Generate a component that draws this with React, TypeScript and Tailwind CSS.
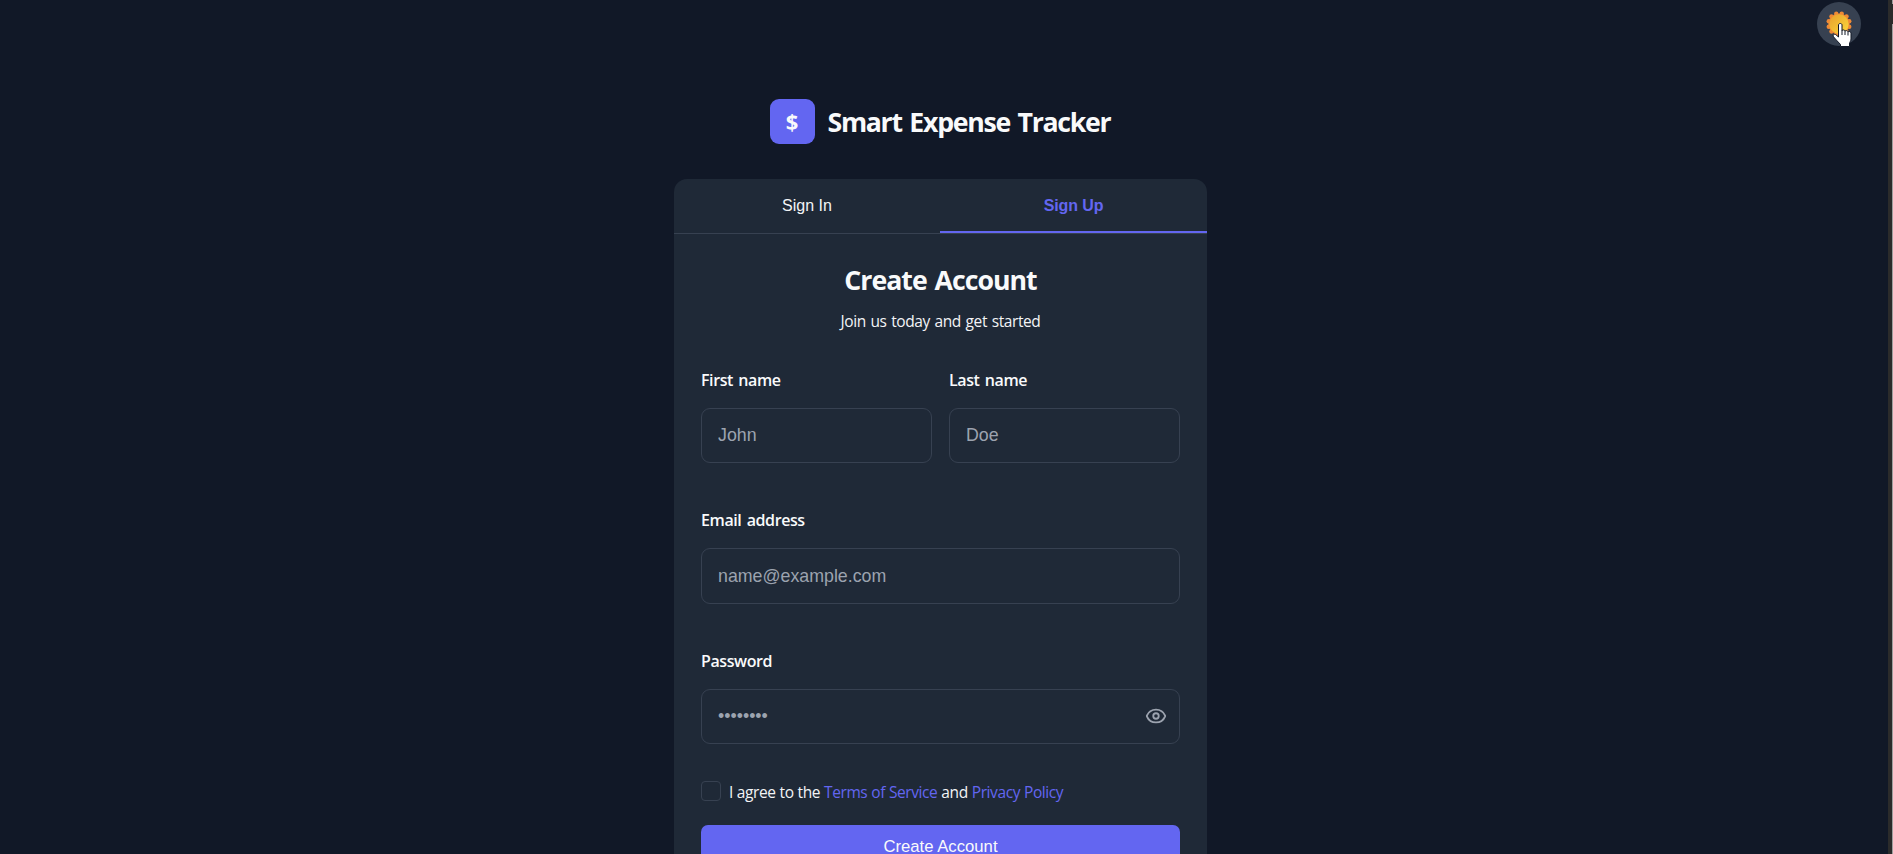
import { Eye } from "lucide-react";

const sunPoints = Array.from({ length: 12 }, (_, i) => {
  const a = (i * Math.PI) / 6 + Math.PI / 12;
  return { x: 13 + 10.6 * Math.cos(a), y: 13 + 10.6 * Math.sin(a) };
});

function Sun() {
  return (
    <svg width="26" height="26" viewBox="0 0 26 26">
      <defs>
        <linearGradient id="sun" x1="0" y1="0" x2="1" y2="1">
          <stop offset="0" stopColor="#e8a02c" />
          <stop offset="1" stopColor="#fbd83c" />
        </linearGradient>
      </defs>
      {sunPoints.map((p, i) => (
        <circle key={i} cx={p.x} cy={p.y} r="2.2" fill="#f08a35" />
      ))}
      <circle cx="13" cy="13" r="10.6" fill="#f08a35" />
      <circle cx="13" cy="13" r="9.7" fill="url(#sun)" />
    </svg>
  );
}

function Cursor() {
  return (
    <svg className="absolute left-[15px] top-[20px]" width="20" height="25" viewBox="0 0 20 25">
      <path
        d="M6.500 3C6.500 1 10 1 10 3V8.500c.6-.9 3-.7 3 .6.6-.9 3-.6 3 .7.7-.7 3-.3 3 1.300V17c0 2-1.500 3.200-1.500 5v2.500H8.500V22.500C6 20 4 17.500 1.700 15 .3 13 2.300 11.500 4 12.800L6.500 15Z"
        fill="#fff"
        stroke="#111827"
        strokeWidth="1"
      />
      <path d="M10 8v5M13 9v4M16 10v3.500" stroke="#111827" strokeWidth="1" />
    </svg>
  );
}

const labelClass =
  "block h-6 text-[16px] leading-6 font-semibold tracking-[-0.4px] [word-spacing:1.5px] text-[#f9fafb]";
const inputClass =
  "block h-[55px] w-full rounded-[9px] border border-[#374151] bg-transparent px-4 font-['Liberation_Sans',sans-serif] text-[17.8px] text-white outline-none placeholder:text-[#9ca3af]";

export default function App() {
  return (
    <div className="flex h-[854px] w-full overflow-hidden bg-[#111827] font-['Open_Sans','Noto_Sans',sans-serif] text-[#f9fafb]">
      <main className="relative flex min-w-0 flex-1 flex-col items-center pr-[7px] pt-[99px]">
        <button className="absolute right-[27px] top-[2px] flex size-[44px] items-center justify-center rounded-full bg-[#374151]">
          <Sun />
          <Cursor />
        </button>

        <header className="flex h-[45px] w-[342px] items-center gap-[13px]">
          <div className="flex size-[45px] shrink-0 items-center justify-center rounded-[9px] bg-[#6366f1] text-[22px] font-bold">
            $
          </div>
          <h1 className="whitespace-nowrap pt-[2px] text-[26.7px] font-bold tracking-[-1.3px] [word-spacing:2px]">
            Smart Expense Tracker
          </h1>
        </header>

        <section className="mt-[35px] w-[533px] shrink-0 rounded-t-[13px] bg-[#1f2937]">
          <div className="flex h-[55px] border-b border-[#374151] font-['Liberation_Sans',sans-serif] text-[16px]">
            <button className="w-[266px] pt-px pb-[2px] text-[#f3f4f6]">Sign In</button>
            <button className="flex-1 border-b-2 border-[#6366f1] pt-px font-bold tracking-[-0.1px] text-[#6366f1]">
              Sign Up
            </button>
          </div>

          <div className="px-[27px]">
            <h2 className="mt-[28px] text-center text-[26.7px] leading-[36px] font-bold tracking-[-1px] [word-spacing:2px]">
              Create Account
            </h2>
            <p className="mt-[11px] text-center text-[15.500px] leading-6 tracking-[-0.4px] [word-spacing:1px] text-[#f3f4f6]">
              Join us today and get started
            </p>

            <form>
              <div className="mt-[35px] grid grid-cols-2 gap-[17px]">
                <div>
                  <label className={labelClass}>First name</label>
                  <input className={`${inputClass} mt-[16px]`} placeholder="John" />
                </div>
                <div>
                  <label className={labelClass}>Last name</label>
                  <input className={`${inputClass} mt-[16px]`} placeholder="Doe" />
                </div>
              </div>
              <div className="mt-[45px]">
                <label className={labelClass}>Email address</label>
                <input className={`${inputClass} mt-[16px] h-[56px]`} placeholder="name@example.com" />
              </div>
              <div className="mt-[45px]">
                <label className={labelClass}>Password</label>
                <div className="relative mt-[16px]">
                  <input className={inputClass} type="text" placeholder="••••••••" />
                  <Eye className="absolute right-[13px] top-[16px] size-[22px] text-[#9ca3af]" />
                </div>
              </div>
              <div className="mt-[36px] flex h-[22px] items-center gap-[8px] text-[15.500px] tracking-[-0.4px] [word-spacing:0.3px] text-[#f3f4f6]">
                <span className="size-5 shrink-0 rounded-[4px] border border-[#374151]" />
                <span className="whitespace-nowrap pt-[3px]">
                  I agree to the <a className="text-[#6366f1]">Terms of Service</a> and{" "}
                  <a className="text-[#6366f1]">Privacy Policy</a>
                </span>
              </div>
              <button className="mt-[23px] h-[44px] w-full rounded-[7px] bg-[#6366f1] font-['Liberation_Sans',sans-serif] text-[16.700px]">
                Create Account
              </button>
            </form>
          </div>
        </section>
      </main>
      <div className="w-[4px] shrink-0 bg-[#2b2b2b]" />
      <div className="w-px shrink-0 bg-[#2b2b2b]">
        <div className="h-[4px] bg-[#9f9f9f]" />
        <div className="mt-[20px] h-[830px] bg-[#9f9f9f]" />
      </div>
    </div>
  );
}
